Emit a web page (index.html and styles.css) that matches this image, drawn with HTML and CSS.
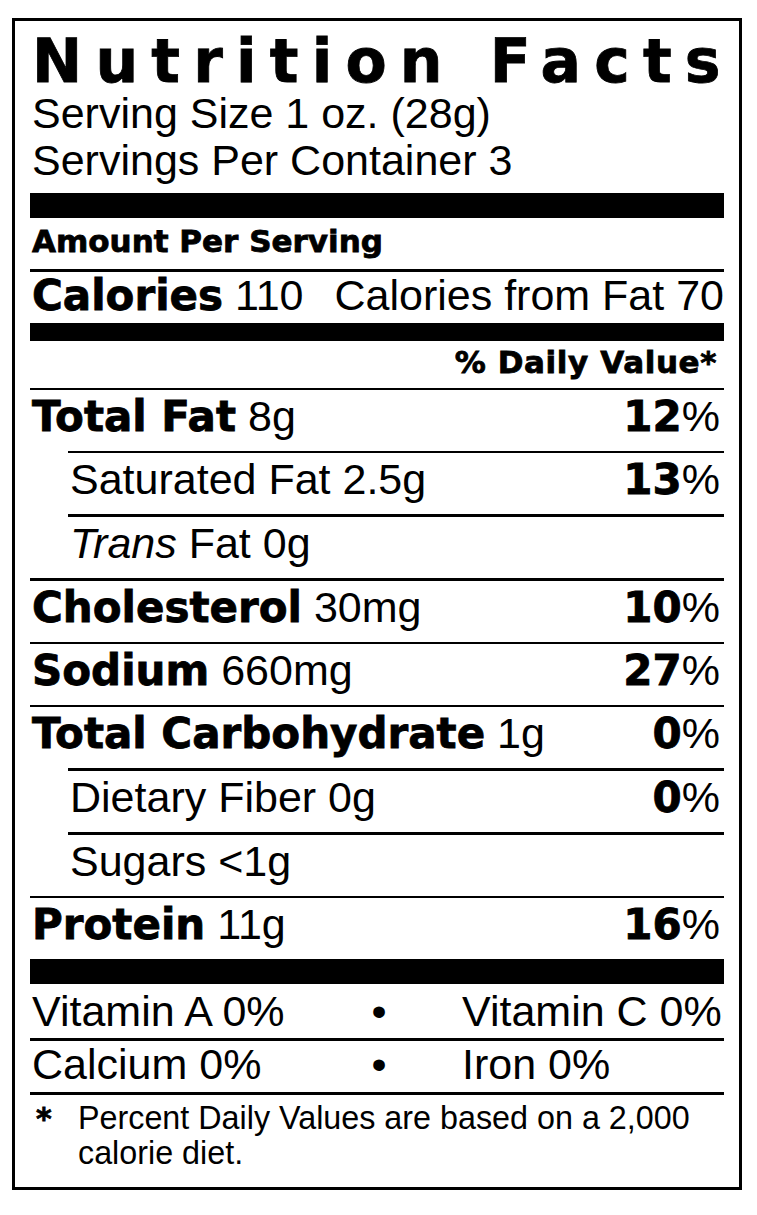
FILE: index.html
```html
<!DOCTYPE html>
<html lang="en">
<head>
<meta charset="utf-8">
<title>Nutrition Facts</title>
<link rel="stylesheet" href="styles.css">
</head>
<body>
<div class="label">
  <h1 class="title">Nutrition Facts</h1>
  <p class="serving">Serving Size 1 oz. (28g)</p>
  <p class="serving">Servings Per Container 3</p>
  <div class="bar bar-top"></div>
  <div class="amount">Amount Per Serving</div>
  <div class="calories"><span><b class="b">Calories</b> 110</span><span>Calories from Fat 70</span></div>
  <div class="bar bar-mid"></div>
  <div class="dv-head">% Daily Value*</div>
  <div class="row"><span><b class="b">Total Fat</b> 8g</span><span class="pct"><b class="b">12</b>%</span></div>
  <div class="row sub"><span>Saturated Fat 2.5g</span><span class="pct"><b class="b">13</b>%</span></div>
  <div class="row sub thick"><span><i>Trans</i> Fat 0g</span></div>
  <div class="row thick"><span><b class="b">Cholesterol</b> 30mg</span><span class="pct"><b class="b">10</b>%</span></div>
  <div class="row"><span><b class="b">Sodium</b> 660mg</span><span class="pct"><b class="b">27</b>%</span></div>
  <div class="row"><span><b class="b">Total Carbohydrate</b> 1g</span><span class="pct"><b class="b">0</b>%</span></div>
  <div class="row sub thick"><span>Dietary Fiber 0g</span><span class="pct"><b class="b">0</b>%</span></div>
  <div class="row sub thick"><span>Sugars &lt;1g</span></div>
  <div class="row"><span><b class="b">Protein</b> 11g</span><span class="pct"><b class="b">16</b>%</span></div>
  <div class="bar bar-bottom"></div>
  <div class="vit vit-first"><span>Vitamin A 0%</span><span class="dot">•</span><span>Vitamin C 0%</span></div>
  <div class="vit vit-second"><span>Calcium 0%</span><span class="dot">•</span><span>Iron 0%</span></div>
  <div class="foot"><span class="star">*</span><p class="foot-text">Percent Daily Values are based on a 2,000 calorie diet.</p></div>
</div>
</body>
</html>
```

FILE: styles.css
```css
* {
  box-sizing: border-box;
  margin: 0;
  padding: 0;
}

body {
  margin: 0;
  background: #fff;
  color: #000;
  font-family: "Liberation Sans", Arial, sans-serif;
}

.label {
  width: 730px;
  margin: 18px 0 0 12px;
  border: 3px solid #000;
  padding: 12px 15px 16px;
}

.b,
.title,
.amount,
.dv-head,
.star {
  font-family: "DejaVu Sans", "Liberation Sans", sans-serif;
  font-weight: 700;
  -webkit-text-stroke: 0.8px #000;
}

.b {
  font-size: 42px;
}

.title {
  font-size: 60px;
  line-height: 57px;
  letter-spacing: 13.2px;
  white-space: nowrap;
  padding-left: 2px;
}

.serving {
  font-size: 43px;
  line-height: 47px;
  padding-left: 2px;
}

.bar {
  background: #000;
}

.bar-top {
  height: 25px;
  margin-top: 9px;
}

.bar-mid {
  height: 18px;
}

.bar-bottom {
  height: 25px;
}

.amount {
  height: 54px;
  font-size: 31px;
  line-height: 47px;
  padding-left: 2px;
  border-bottom: 3px solid #000;
}

.calories {
  display: flex;
  justify-content: space-between;
  height: 51px;
  padding-left: 2px;
  font-size: 43px;
  line-height: 47px;
  white-space: nowrap;
}

.dv-head {
  height: 47px;
  font-size: 31px;
  line-height: 43px;
  letter-spacing: 0.6px;
  text-align: right;
  padding-right: 7px;
}

.row {
  box-sizing: content-box;
  display: flex;
  justify-content: space-between;
  height: 61px;
  padding-left: 2px;
  border-top: 2px solid #000;
  font-size: 43px;
  line-height: 53px;
  white-space: nowrap;
}

.row.thick {
  border-top-width: 3px;
}

.row.sub {
  margin-left: 38px;
}

.pct {
  padding-right: 4px;
}

.vit {
  display: grid;
  grid-template-columns: 302px 90px 1fr;
  padding-left: 2px;
  font-size: 43px;
  line-height: 47px;
  white-space: nowrap;
}

.vit-first {
  height: 54px;
  padding-top: 4px;
}

.vit-second {
  box-sizing: content-box;
  height: 51px;
  border-top: 3px solid #000;
}

.dot {
  text-align: center;
}

.vit span:last-child {
  padding-left: 38px;
}

.foot {
  display: flex;
  border-top: 3px solid #000;
  padding-top: 6px;
}

.star {
  flex: 0 0 48px;
  font-size: 30px;
  line-height: 35px;
  padding-left: 6px;
}

.foot-text {
  font-size: 32.3px;
  line-height: 35px;
}
```
